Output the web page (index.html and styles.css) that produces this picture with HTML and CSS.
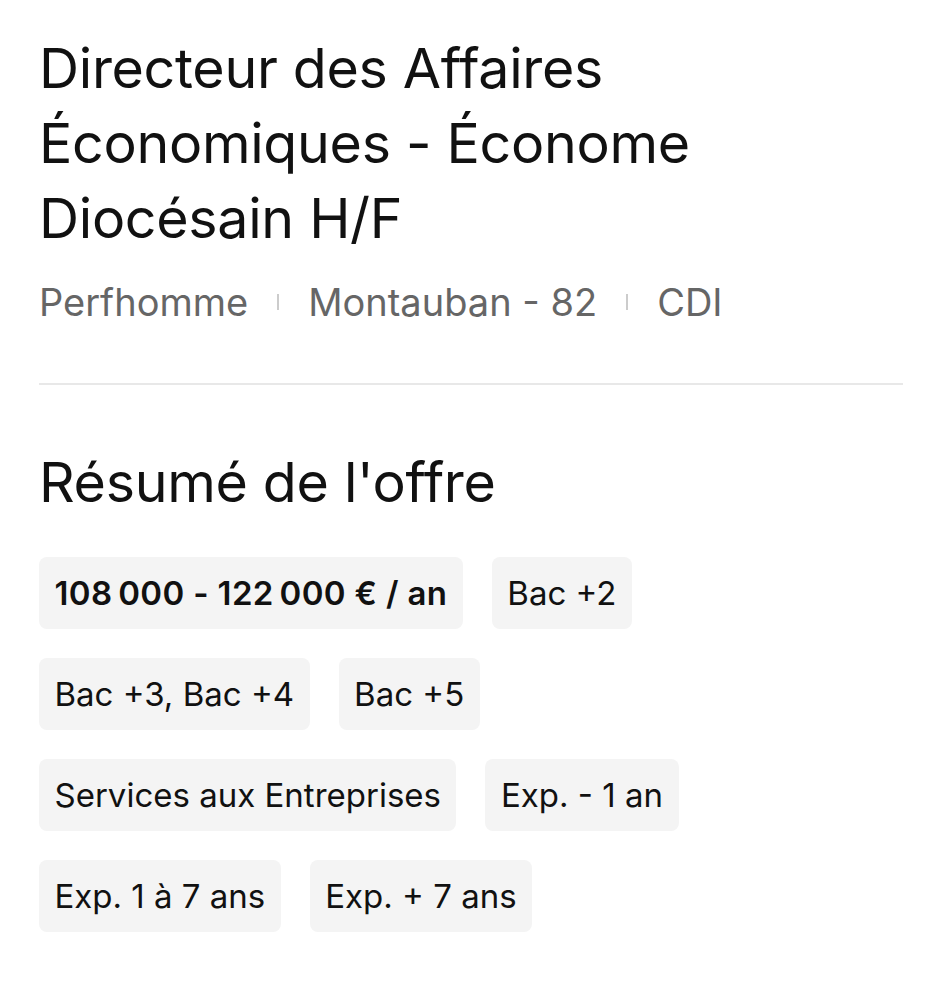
FILE: index.html
```html
<!DOCTYPE html>
<html lang="fr">
<head>
<meta charset="utf-8">
<title>Offre</title>
<link rel="stylesheet" href="styles.css">
</head>
<body>
<main class="page">
  <h1 class="title">Directeur des Affaires Économiques - Économe Diocésain H/F</h1>
  <div class="meta">
    <span>Perfhomme</span>
    <span class="sep"></span>
    <span>Montauban - 82</span>
    <span class="sep"></span>
    <span>CDI</span>
  </div>
  <hr class="divider">
  <h2 class="section">Résumé de l'offre</h2>
  <ul class="chips">
    <li class="chip chip-strong">108&#8239;000 - 122&#8239;000 € / an</li>
    <li class="chip">Bac +2</li>
    <li class="chip">Bac +3, Bac +4</li>
    <li class="chip">Bac +5</li>
    <li class="chip">Services aux Entreprises</li>
    <li class="chip">Exp. - 1 an</li>
    <li class="chip">Exp. 1 à 7 ans</li>
    <li class="chip">Exp. + 7 ans</li>
  </ul>
</main>
</body>
</html>
```

FILE: styles.css
```css
html, body {
  margin: 0;
  padding: 0;
  background: #ffffff;
}
body {
  font-family: Inter, "Noto Sans", sans-serif;
  color: #111111;
}
.page {
  padding: 30px 39px 40px 39px;
}
.title {
  margin: 0;
  font-size: 55.5px;
  font-weight: 400;
  line-height: 75px;
  letter-spacing: -0.3px;
  max-width: 720px;
}
.meta {
  display: flex;
  align-items: center;
  gap: 29px;
  margin-top: 22px;
  font-size: 38px;
  color: #666666;
  line-height: 50px;
}
.sep {
  width: 2px;
  height: 16px;
  background: #cccccc;
}
.divider {
  border: 0;
  height: 2px;
  background: #e8e8e8;
  margin: 56px 0 0 0;
}
.section {
  margin: 59px 0 0 0;
  font-size: 55.5px;
  font-weight: 400;
  line-height: 75px;
  letter-spacing: -0.3px;
}
.chips {
  list-style: none;
  margin: 38px 0 0 0;
  padding: 0;
  display: flex;
  flex-wrap: wrap;
  gap: 29px;
  max-width: 720px;
}
.chip {
  background: #f4f4f4;
  border-radius: 8px;
  height: 72px;
  padding: 0 15.5px;
  display: flex;
  align-items: center;
  font-size: 33px;
  color: #111111;
}
.chip-strong {
  font-weight: 600;
  letter-spacing: 0.35px;
}
```
